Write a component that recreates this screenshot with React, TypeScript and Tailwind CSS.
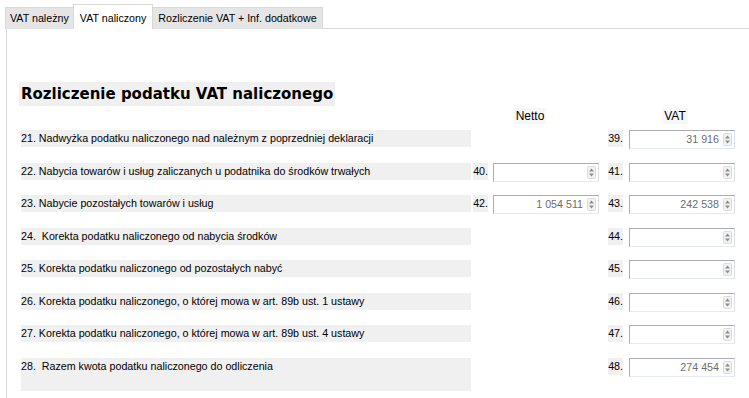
import React from 'react';

type Row = {
  label: string;
  netto?: { num: string; value: string };
  vat: { num: string; value: string };
  tall?: boolean;
};

const ROWS: Row[] = [
  { label: '21. Nadwyżka podatku naliczonego nad należnym z poprzedniej deklaracji', vat: { num: '39.', value: '31 916' } },
  {
    label: '22. Nabycia towarów i usług zaliczanych u podatnika do środków trwałych',
    netto: { num: '40.', value: '' },
    vat: { num: '41.', value: '' },
  },
  {
    label: '23. Nabycie pozostałych towarów i usług',
    netto: { num: '42.', value: '1 054 511' },
    vat: { num: '43.', value: '242 538' },
  },
  { label: '24.  Korekta podatku naliczonego od nabycia środków', vat: { num: '44.', value: '' } },
  { label: '25. Korekta podatku naliczonego od pozostałych nabyć', vat: { num: '45.', value: '' } },
  { label: '26. Korekta podatku naliczonego, o której mowa w art. 89b ust. 1 ustawy', vat: { num: '46.', value: '' } },
  { label: '27. Korekta podatku naliczonego, o której mowa w art. 89b ust. 4 ustawy', vat: { num: '47.', value: '' } },
  { label: '28.  Razem kwota podatku naliczonego do odliczenia', vat: { num: '48.', value: '274 454' }, tall: true },
];

function Spinner() {
  return (
    <svg width="9" height="13" viewBox="0 0 9 13" aria-hidden="true">
      <rect x="0.5" y="0.5" width="8" height="12" rx="1" fill="#f2f2f2" stroke="#dcdcdc" />
      <path d="M2 5.5 L4.5 2.5 L7 5.5 Z" fill="#8c8c8c" />
      <path d="M2 7.5 L4.5 10.5 L7 7.5 Z" fill="#8c8c8c" />
    </svg>
  );
}

function NumberBox({ value }: { value: string }) {
  return (
    <div className="flex h-[19px] w-[106px] items-center border border-[#abadb3] border-b-[#e3e9ef] border-r-[#dbdfe6] bg-white pl-1 pr-[2px]">
      <span className="flex-1 truncate pr-[4px] text-right text-[#6d6d6d]">{value}</span>
      <Spinner />
    </div>
  );
}

function NumLabel({ num, width }: { num: string; width: string }) {
  return (
    <div className={`flex justify-end ${width}`}>
      <span className="h-[17px] bg-[#f0f0f0] leading-[17px]">{num}</span>
    </div>
  );
}

export default function App() {
  return (
    <div
      className="h-[398px] w-[749px] overflow-hidden bg-white text-[10.7px] text-black"
      style={{ fontFamily: '"Liberation Sans", Arial, sans-serif' }}
    >
      {/* Tabs */}
      <div className="flex h-[29px] items-end pl-[5px]">
        <div className="flex h-[22px] items-center border border-b-0 border-[#d9d9d9] bg-[#e5e5e5] px-[4px]">
          VAT należny
        </div>
        <div className="-mx-px flex h-[25px] items-start border border-b-0 border-[#d9d9d9] bg-white px-[6px] pt-[5px]">
          VAT naliczony
        </div>
        <div className="flex h-[22px] items-center border border-b-0 border-[#d9d9d9] bg-[#e5e5e5] px-[5px]">
          Rozliczenie VAT + Inf. dodatkowe
        </div>
        <div className="h-px flex-1 bg-[#d9d9d9]" />
      </div>

      {/* Panel */}
      <div className="ml-[6px] h-[369px] border-l border-[#d9d9d9] pl-[12px]">
        <div className="pt-[53px]">
          <div
            className="inline-flex h-[24px] items-center bg-[#f0f0f0] px-[2px] text-[15px] font-bold"
            style={{ fontFamily: '"DejaVu Sans", Verdana, sans-serif' }}
          >
            Rozliczenie podatku VAT naliczonego
          </div>
        </div>

        {/* Column headers */}
        <div className="flex h-[24px] items-start pl-[2px] pt-[2px] text-[12px]">
          <div className="w-[456px]" />
          <div className="flex w-[106px] justify-center">
            <span className="bg-[#f7f7f7] px-[2px] leading-[16px]">Netto</span>
          </div>
          <div className="w-[39px]" />
          <div className="flex w-[106px] justify-center">
            <span className="bg-[#f7f7f7] px-[2px] leading-[16px]">VAT</span>
          </div>
        </div>

        {/* Rows */}
        <div className="pl-[2px]">
          {ROWS.map((row) => (
            <div key={row.label} className="flex h-[32.5px] items-start">
              <div
                className={`w-[450px] whitespace-pre bg-[#f0f0f0] leading-[17px] ${row.tall ? 'h-[33px]' : 'h-[17px]'}`}
              >
                {row.label}
              </div>
              {row.netto ? (
                <>
                  <NumLabel num={row.netto.num} width="w-[17px]" />
                  <div className="ml-[5px]">
                    <NumberBox value={row.netto.value} />
                  </div>
                </>
              ) : (
                <div className="w-[128px]" />
              )}
              <NumLabel num={row.vat.num} width="w-[24px]" />
              <div className="ml-[6px]">
                <NumberBox value={row.vat.value} />
              </div>
            </div>
          ))}
        </div>
      </div>
    </div>
  );
}
